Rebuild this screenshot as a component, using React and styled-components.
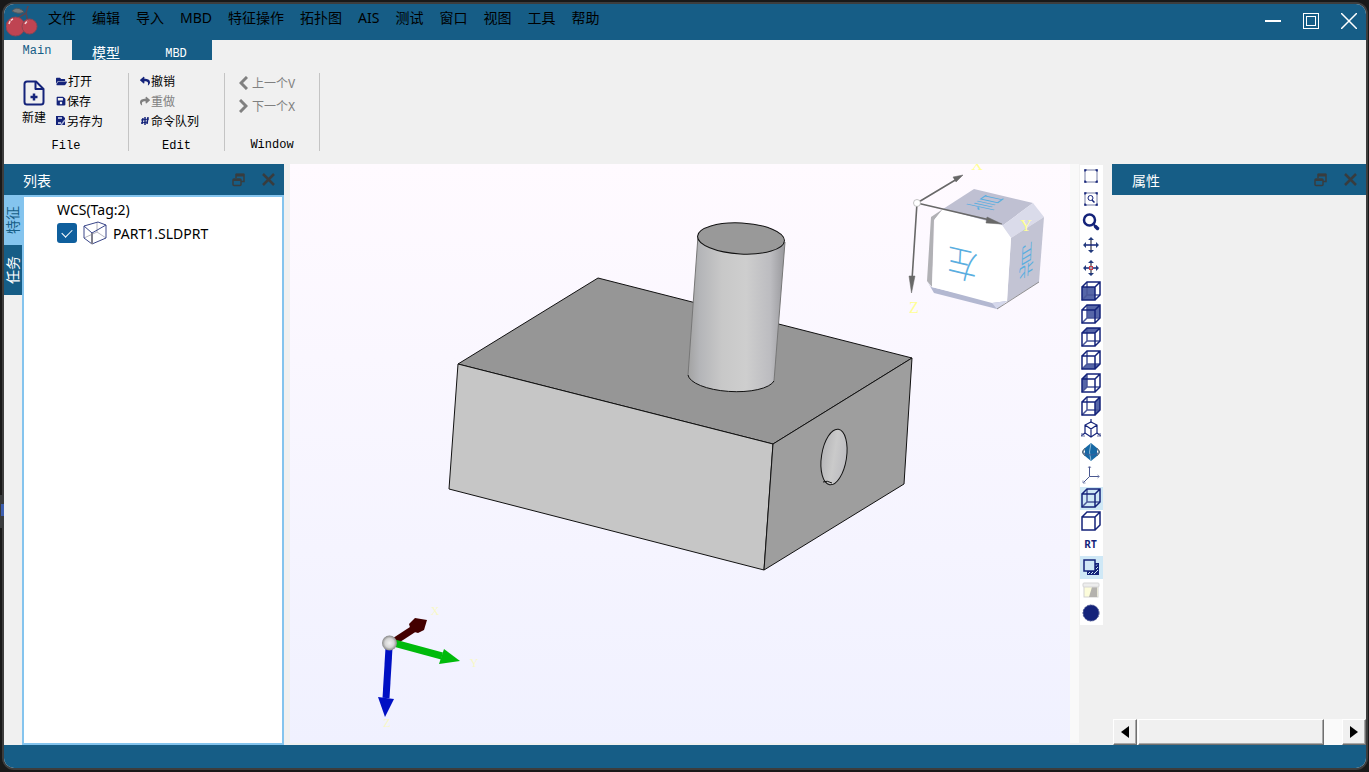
import React from 'react';
import styled, { createGlobalStyle, css } from 'styled-components';
import { FaFolderOpen, FaSave, FaReply, FaShare } from 'react-icons/fa';

const NAVY = '#14237a';
const BLUE = '#165d86';
const SKY = '#84c4ee';
const UI_FONT = '"Noto Sans", "Noto Sans CJK SC", sans-serif';
const SONG_FONT = '"Liberation Mono", "Noto Sans CJK SC", monospace';

const GlobalStyle = createGlobalStyle`
	* {
		box-sizing: border-box;
	}
	body {
		margin: 0;
		background: #191919;
		font-family: ${UI_FONT};
		font-size: 14px;
		color: #000;
	}
	button {
		border: none;
		padding: 0;
		background: none;
		font: inherit;
		color: inherit;
	}
	svg {
		display: block;
		flex: none;
	}
`;

const Desktop = styled.div`
	position: relative;
	height: 100vh;
	padding: 2px 1px 2px 2px;
`;

// piece of another window peeking out behind the frame
const EdgeTab = styled.div`
	position: absolute;
	left: 0;
	top: 495px;
	width: 4px;
	height: 33px;
	background: #3a3c3d;
	&::after {
		content: '';
		display: block;
		width: 3px;
		height: 12px;
		margin: 9px 0 0 1px;
		background: #3d5fb0;
	}
`;

const AppWindow = styled.div`
	display: flex;
	flex-direction: column;
	height: 100%;
	border: 2px solid #3d3d3d;
	border-radius: 12px;
	background: #f0f0f0;
	overflow: hidden;
`;

const TitleBar = styled.header`
	display: flex;
	height: 36px;
	flex: none;
	padding: 2px 5px 0 2px;
	background: ${BLUE};
`;

const MenuBar = styled.nav`
	display: flex;
	flex: 1;
	gap: 16px;
	height: 24px;
	margin-left: 10px;
`;

const MenuItem = styled.button`
	line-height: 24px;
	white-space: nowrap;
`;

const WindowButtons = styled.div`
	display: flex;
	gap: 14px;
`;

const WindowButton = styled.button`
	display: flex;
	align-items: center;
	justify-content: center;
	width: 24px;
	height: 30px;
`;

const TabBar = styled.div`
	display: flex;
	flex: none;
	height: 20px;
	font-family: ${SONG_FONT};
`;

const Tab = styled.button`
	width: ${p => (p.$active ? 68 : 70)}px;
	line-height: 20px;
	font-size: ${p => (p.$cjk ? 14 : 12)}px;
	padding: ${p => (p.$active ? '1px 2px 0 0' : '4px 2px 0 0')};
	color: ${p => (p.$active ? BLUE : '#fff')};
	background: ${p => (p.$active ? '#f0f0f0' : BLUE)};
`;

const Ribbon = styled.div`
	display: flex;
	flex: none;
	height: 104px;
	padding: 11px 0 9px;
	font-family: ${SONG_FONT};
	font-size: 12px;
`;

const RibbonGroup = styled.section`
	display: flex;
	flex-direction: column;
	width: ${p => p.$width}px;
`;

const RibbonDivider = styled.div`
	width: 1px;
	margin: 2px 0 4px;
	background: #c4c4c4;
`;

const GroupBody = styled.div`
	display: flex;
	gap: 9px;
	height: 60px;
	padding-left: ${p => p.$left}px;
`;

const GroupLabel = styled.div`
	padding-top: 5px;
	line-height: 20px;
	text-align: center;
`;

const BigButton = styled.button`
	display: flex;
	flex-direction: column;
	align-items: center;
	gap: 2px;
	width: 26px;
	padding-top: 9px;
	line-height: 22px;
	white-space: nowrap;
`;

const CommandList = styled.div`
	display: flex;
	flex-direction: column;
`;

const CommandButton = styled.button`
	display: flex;
	align-items: center;
	gap: ${p => (p.$tall ? 4 : 1)}px;
	height: ${p => (p.$tall ? 23 : 20)}px;
	white-space: nowrap;
	color: ${p => (p.$muted ? '#808080' : '#000')};
	svg {
		color: ${p => (p.$muted ? '#808080' : NAVY)};
	}
`;

const Workspace = styled.main`
	display: flex;
	flex: 1;
	min-height: 0;
`;

const Dock = styled.aside`
	display: flex;
	flex-direction: column;
	width: ${p => p.$width}px;
	flex: none;
`;

const DockTitle = styled.div`
	display: flex;
	align-items: center;
	gap: 17px;
	height: 31px;
	flex: none;
	padding: 0 9px 0 ${p => p.$left}px;
	background: ${BLUE};
	color: #fff;
	span {
		flex: 1;
	}
`;

const DockBody = styled.div`
	display: flex;
	flex: 1;
	min-height: 0;
`;

const SideTabs = styled.div`
	display: flex;
	flex-direction: column;
	width: 18px;
`;

const SideTab = styled.button`
	height: 50px;
	width: 18px;
	writing-mode: vertical-rl;
	text-orientation: sideways;
	transform: rotate(180deg);
	line-height: 18px;
	text-align: center;
	color: ${p => (p.$active ? BLUE : '#fff')};
	background: ${p => (p.$active ? SKY : BLUE)};
`;

const Tree = styled.ul`
	flex: 1;
	margin: 0;
	padding: 0 0 0 33px;
	border: 2px solid ${SKY};
	background: #fff;
	list-style: none;
`;

const TreeRow = styled.li`
	display: flex;
	align-items: center;
	gap: 6px;
	height: 24px;
`;

const TreeLabel = styled.label`
	display: flex;
	align-items: center;
	gap: 6px;
`;

const TreeCheck = styled.input`
	appearance: none;
	width: 20px;
	height: 20px;
	margin: 0;
	border-radius: 3px;
	background: #0f5f9d;
	display: grid;
	place-items: center;
	&:checked::after {
		content: '';
		width: 9px;
		height: 5px;
		margin-top: -3px;
		border: solid #fff;
		border-width: 0 0 1px 1px;
		transform: rotate(-45deg);
	}
`;

const Viewport = styled.div`
	flex: 1;
	min-width: 0;
	margin: 0 0 2px 6px;
	background: linear-gradient(#fffaff, #f0f1ff);
	svg {
		width: 100%;
		height: 100%;
	}
`;

const Gutter = styled.div`
	width: 9px;
	margin-bottom: 2px;
	background: #f9f9f9;
`;

const ViewTools = styled.div`
	display: flex;
	flex-direction: column;
	width: 23px;
	margin: 1px 9px 0 1px;
`;

const ViewTool = styled.button`
	display: flex;
	align-items: center;
	justify-content: center;
	height: 23px;
	padding: 0 2px 2px 0;
	font-size: 10px;
	font-weight: 700;
	color: ${NAVY};
	background: ${p => (p.$on ? '#cfe8f6' : '#fff')};
`;

const Properties = styled.div`
	flex: 1;
`;

const ScrollBar = styled.div`
	display: flex;
	height: 26px;
	margin-left: 1px;
	background: #fafafa;
`;

const raised = css`
	background: #f0f0f0;
	border: 1px solid;
	border-color: #fff #707070 #707070 #fff;
	box-shadow: inset -1px -1px 0 #a8a8a8;
`;

const ScrollButton = styled.button`
	${raised}
	display: flex;
	align-items: center;
	justify-content: center;
	width: 24px;
`;

const ScrollThumb = styled.div`
	${raised}
	flex: 1;
	margin: 0 18px 0 1px;
`;

const StatusBar = styled.footer`
	height: 23px;
	flex: none;
	background: ${BLUE};
`;

const Logo = () => (
	<svg width="32" height="32" viewBox="0 0 32 32">
		<path d="M12 12L20 7L22 0M20 7L22 16" fill="none" stroke="#5b4550" strokeWidth="1.5" />
		<path d="M6 5Q10 0 16 4L18 6Q12 9 6 5Z" fill="#77797a" stroke="#4d5860" />
		<circle cx="9.500" cy="20.500" r="9.500" fill="#bf4452" stroke="#8c4553" />
		<circle cx="23.500" cy="20.500" r="7.500" fill="#bf4452" stroke="#8c4553" />
		<path d="M3 18Q4 14 7 13M19 18Q20 16 22 15" fill="none" stroke="#f3d4d7" strokeWidth="1.500" strokeDasharray="3 1" />
	</svg>
);

const NewFileIcon = () => (
	<svg width="22" height="26" viewBox="0 0 22 26" fill="none" stroke={NAVY} strokeWidth="2" strokeLinejoin="round">
		<path d="M4 1.500H13L20.500 9V22Q20.500 24.500 18 24.500H4Q1.500 24.500 1.500 22V4Q1.500 1.500 4 1.500Z" />
		<path d="M12.500 2V9H20" />
		<path d="M11 13.500V20.500M7.500 17H14.500" strokeWidth="2.500" />
	</svg>
);

const SaveAsIcon = () => (
	<svg width="10" height="10" viewBox="0 0 10 10">
		<path d="M0 0H7L9 2V9H0Z" fill={NAVY} />
		<path d="M2 1H6V3H2ZM2 6H5V8H2Z" fill="#aeb6d8" />
		<path d="M5 9L9 4" stroke="#aeb6d8" strokeWidth="1.500" />
	</svg>
);

const QueueIcon = () => (
	<svg width="10" height="10" viewBox="0 0 10 10" stroke={NAVY} fill="none">
		<path d="M3 2L2 8M5 1V9M8 1L7 8" strokeWidth="1.500" />
		<path d="M1 4L9 3M1 7L8 6" />
	</svg>
);

const ChevronIcon = ({ next }) => (
	<svg width="9" height="14" viewBox="0 0 9 14" fill="none" stroke="currentColor" strokeWidth="3">
		<path d={next ? 'M1 1L7 7L1 13' : 'M8 1L2 7L8 13'} />
	</svg>
);

const RestoreIcon = () => (
	<svg width="13" height="14" viewBox="0 0 13 14" fill="none" stroke="#383c3e" strokeWidth="1.500">
		<path d="M4 5V1.500H12V8.500H9" />
		<path d="M4 2H12" strokeWidth="3" />
		<rect x="1" y="6" width="8" height="6.500" rx="1" />
		<path d="M1 7H9" strokeWidth="2" />
	</svg>
);

const CrossIcon = () => (
	<svg width="13" height="13" viewBox="0 0 13 13" stroke="#383c3e" strokeWidth="2.500">
		<path d="M1 1L12 12M12 1L1 12" />
	</svg>
);

const PartIcon = () => (
	<svg width="24" height="24" viewBox="0 0 24 24" fill="none" strokeLinejoin="round">
		<path d="M14 1V11L1 17M14 11L23 17" stroke="#b4b4c0" />
		<path d="M1 5L15 1L23 4V17L9 23L1 17ZM1 5L9 12L23 4" stroke="#3a4689" />
		<path d="M9 12V23" stroke="#80808c" strokeWidth="2" />
	</svg>
);

const SHADES = {
	front: 'M1 6H14V19H1Z',
	back: 'M6 1H19V14H6Z',
	top: 'M1 6L6 1H19L14 6Z',
	bottom: 'M1 19L6 14H19L14 19Z',
	left: 'M1 6L6 1V14L1 19Z',
	right: 'M14 6L19 1V14L14 19Z',
};

const CubeIcon = ({ side, solid }) => (
	<svg width="20" height="20" viewBox="0 0 20 20" fill="none" stroke={NAVY} strokeWidth="1.500">
		{side && <path d={SHADES[side]} fill="#5666a8" stroke="none" />}
		{!solid && <path d="M6 1V14H19M6 14L1 19" stroke="#4a5799" />}
		<path d="M1 6H14V19H1ZM1 6L6 1H19V14L14 19M14 6L19 1" />
	</svg>
);

const FitIcon = ({ lens }) => (
	<svg width="14" height="14" viewBox="0 0 14 14" fill="none">
		<rect x="1" y="1" width="12" height="12" stroke="#a5aac4" strokeWidth="1.500" />
		<path d="M1 2.500V1H2.500M11.500 1H13V2.500M13 11.500V13H11.500M2.500 13H1V11.500" stroke={NAVY} strokeWidth="1.500" />
		{lens && <circle cx="6.500" cy="6" r="2.500" stroke={NAVY} />}
		{lens && <path d="M8 8L10.500 10.500" stroke={NAVY} strokeWidth="1.500" />}
	</svg>
);

const ZoomIcon = () => (
	<svg width="18" height="18" viewBox="0 0 18 18" fill="none" stroke={NAVY} strokeLinecap="round">
		<circle cx="7.500" cy="7" r="5.500" strokeWidth="2.500" />
		<path d="M11.500 11L13 13" strokeWidth="2" />
		<path d="M13.500 13.500L15.500 15.500" strokeWidth="3.500" />
	</svg>
);

const PanIcon = ({ target }) => (
	<svg width="16" height="16" viewBox="0 0 16 16">
		<path d="M8 2V14" stroke="#85858f" strokeWidth="2" />
		<path d="M2 8H14" stroke={NAVY} strokeWidth="1.500" />
		<path d="M5 3L8 0L11 3ZM5 13L8 16L11 13ZM3 5L0 8L3 11ZM13 5L16 8L13 11Z" fill="#233b7d" />
		{target && <rect x="6.500" y="6.500" width="3" height="3" fill="#a9a9b4" stroke="#c8404c" />}
	</svg>
);

const AxoIcon = () => (
	<svg width="20" height="20" viewBox="0 0 20 20" fill="none" stroke={NAVY} strokeWidth="1.200">
		<path d="M10 0V4M4 14L0 17M16 14L20 17" />
		<path d="M10 3L16 6V14L10 18L4 14V6ZM4 6L10 10L16 6M10 10V18" />
		<path d="M1 14V17H4M16 17H19V14" stroke="#6c76a7" />
	</svg>
);

const RotateIcon = () => (
	<svg width="18" height="18" viewBox="0 0 18 18">
		<ellipse cx="9" cy="9" rx="8" ry="4" fill="none" stroke="#72899d" strokeWidth="1.500" />
		<path d="M9 0L15 5V13L9 18L3 13V5Z" fill="#1769a5" />
		<path d="M9 0Q6 9 9 18" fill="none" stroke="#8fb9d3" />
		<path d="M2 10Q9 14 16 10" fill="none" stroke="#3b5f9a" />
		<path d="M3 5L0 9L3 13M15 5L18 9L15 13" fill="none" stroke="#50677b" />
	</svg>
);

const AxesIcon = () => (
	<svg width="18" height="18" viewBox="0 0 18 18" fill="none" stroke="#4a5890">
		<path d="M7.500 1V10.500H17M7.500 10.500L1 17" />
		<path d="M6 2L7.500 0L9 2M15.500 9L17.500 10.500L15.500 12M1 14.500V17H3.500" stroke="#8a93b8" />
	</svg>
);

const ShadowIcon = () => (
	<svg width="16" height="16" viewBox="0 0 16 16">
		<path d="M12 4H16V16H4V12H12Z" fill={NAVY} />
		<path d="M5 15L7 13M8 15L10 13M11 15L15 11M13 10L15 8M12.500 7L14 5.500" stroke="#cfe8f6" />
		<rect x="1" y="1" width="11" height="11" fill="#cfe8f6" stroke={NAVY} strokeWidth="1.500" />
	</svg>
);

const MaterialIcon = () => (
	<svg width="18" height="16" viewBox="0 0 18 16">
		<rect x="2" y="4" width="14" height="11" fill="#fcfcda" stroke="#d2d2d2" />
		<path d="M10 5H15V15H7Z" fill="#b4b2ae" />
		<rect x="1" y="1" width="16" height="4" rx="1" fill="#ededed" stroke="#d5d5d5" />
	</svg>
);

const BallIcon = () => (
	<svg width="18" height="18" viewBox="0 0 18 18">
		<circle cx="9" cy="9" r="8" fill={NAVY} stroke="#47548f" strokeDasharray="2 1" />
	</svg>
);

const Model = () => (
	<g stroke="#111" strokeLinejoin="round">
		<path d="M458 364L598 278L912 358L773 444Z" fill="#969696" />
		<path d="M458 364L773 444L764 570L449 489Z" fill="#c6c6c6" />
		<path d="M773 444L912 358L904 484L764 570Z" fill="#9e9e9e" />
		<path d="M698 236L688 375A43.500 15.500 3 0 0 774 381L785 242Z" fill="url(#shaft)" stroke="none" />
		<path d="M698 236L688 375M774 381L785 242" stroke="#777" fill="none" />
		<path d="M688 375A43.500 15.500 3 0 0 774 381" fill="none" />
		<ellipse cx="741" cy="238.500" rx="43.500" ry="15.500" transform="rotate(3 741 238.500)" fill="#999" />
		<ellipse cx="834" cy="457" rx="12.500" ry="28" transform="rotate(9 834 457)" fill="url(#bore)" />
		<path d="M823 482Q827 480 832 483" fill="none" />
	</g>
);

const ViewCube = () => (
	<g>
		<path d="M943 209L974 189L1033 203L1002 226Z" fill="#bfc0d2" />
		<path d="M1002 226L1033 203L1044 217L1011 238Z" fill="#dadbea" />
		<path d="M1011 238L1044 217L1039 282L1007 302Z" fill="#c3c4d4" />
		<path d="M931 217L943 209L934 220L932 287L927 281Z" fill="#b1b1b5" />
		<path d="M931 287L992 301L1007 301L997 309L934 293L927 281Z" fill="#b3b8d1" />
		<path d="M943 209L1002 225L1011 238L1007 301L992 303L932 287L935 219Z" fill="#fff" />
		<path d="M992 303L1007 301L997 309Z" fill="#d5d8ec" />
		<path d="M997 309L1039 282" stroke="#777" strokeWidth="0.800" />
		<g fill="#5aaee0" fontFamily='"Noto Sans CJK SC", sans-serif' textAnchor="middle">
			<text fontSize="32" fontWeight="300" transform="matrix(-0.94 -0.22 0.06 -1.1 963 251)">左</text>
			<text fontSize="26" fontWeight="300" transform="matrix(-0.6 0.36 0.06 -1.4 1027 247)">背</text>
			<text fontSize="28" fontWeight="300" transform="matrix(-1.1 -0.24 0.7 -0.5 993 198)">言</text>
		</g>
		<g stroke="#686868" strokeWidth="1.600" fill="#686868">
			<path d="M917 203L957 179M917 203L990 220M917 203L912 280" />
			<path d="M963 175L956 182L953 177ZM1002 224L986 223L987 217ZM911.500 293L909 276L915 276Z" strokeWidth="0.500" />
		</g>
		<circle cx="917" cy="203" r="3.500" fill="#fff" stroke="#aaa" strokeWidth="0.700" />
		<g fill="#ffff96" fontFamily='"Liberation Serif", serif' fontSize="16" textAnchor="middle">
			<text x="977" y="170">X</text>
			<text x="1026" y="231">Y</text>
			<text x="914" y="313">Z</text>
		</g>
	</g>
);

const Triad = () => (
	<g>
		<path d="M395 641L415 628" stroke="#430000" strokeWidth="7" />
		<path d="M409 624L415 618L427 620L424 630L418 633L411 631Z" fill="#430000" />
		<path d="M394 643L442 656" stroke="#00ba0b" strokeWidth="7" />
		<path d="M444 649L439 664L460 661Z" fill="#00ba0b" />
		<path d="M389 648L386 698" stroke="#0010c4" strokeWidth="7" />
		<path d="M378 697L394 699L385 717Z" fill="#0010c4" />
		<circle cx="389.500" cy="643" r="7.500" fill="url(#ball)" />
		<g fill="#f8f8c8" fontFamily='"Liberation Serif", serif' fontSize="12" textAnchor="middle">
			<text x="435" y="615">X</text>
			<text x="474" y="667">Y</text>
			<text x="387" y="727">Z</text>
		</g>
	</g>
);

// scene units are window pixels, offset to where the canvas starts
const Scene = () => (
	<svg viewBox="290 164 780 579" preserveAspectRatio="xMidYMid meet">
		<defs>
			<linearGradient id="shaft">
				<stop offset="0" stopColor="#a2a2a2" />
				<stop offset="0.120" stopColor="#b4b5b8" />
				<stop offset="0.350" stopColor="#c8c8c8" />
				<stop offset="0.600" stopColor="#cecece" />
				<stop offset="0.850" stopColor="#bcbcc0" />
				<stop offset="1" stopColor="#98989c" />
			</linearGradient>
			<linearGradient id="bore">
				<stop offset="0" stopColor="#b6b6b8" />
				<stop offset="0.500" stopColor="#cacaca" />
				<stop offset="1" stopColor="#bcbcc0" />
			</linearGradient>
			<radialGradient id="ball">
				<stop offset="0" stopColor="#f0f0f0" />
				<stop offset="0.600" stopColor="#d4d4d4" />
				<stop offset="1" stopColor="#888" />
			</radialGradient>
		</defs>
		<Model />
		<ViewCube />
		<Triad />
	</svg>
);

const menus = ['文件', '编辑', '导入', 'MBD', '特征操作', '拓扑图', 'AIS', '测试', '窗口', '视图', '工具', '帮助'];

const viewTools = [
	{ name: 'fit', icon: <FitIcon /> },
	{ name: 'fit selection', icon: <FitIcon lens /> },
	{ name: 'zoom', icon: <ZoomIcon /> },
	{ name: 'pan', icon: <PanIcon /> },
	{ name: 'pan to point', icon: <PanIcon target /> },
	{ name: 'front', icon: <CubeIcon side="front" /> },
	{ name: 'back', icon: <CubeIcon side="back" /> },
	{ name: 'top', icon: <CubeIcon side="top" /> },
	{ name: 'bottom', icon: <CubeIcon side="bottom" /> },
	{ name: 'left', icon: <CubeIcon side="left" /> },
	{ name: 'right', icon: <CubeIcon side="right" /> },
	{ name: 'axonometric', icon: <AxoIcon /> },
	{ name: 'rotate', icon: <RotateIcon /> },
	{ name: 'axes', icon: <AxesIcon /> },
	{ name: 'wireframe', icon: <CubeIcon />, on: true },
	{ name: 'shaded', icon: <CubeIcon solid /> },
	{ name: 'ray tracing', icon: 'RT' },
	{ name: 'shadow', icon: <ShadowIcon />, on: true },
	{ name: 'material', icon: <MaterialIcon /> },
	{ name: 'environment', icon: <BallIcon /> },
];

const TitleBarComponent = () => {
	return (
		<TitleBar>
			<Logo />
			<MenuBar>
				{menus.map(m => <MenuItem key={m}>{m}</MenuItem>)}
			</MenuBar>
			<WindowButtons>
				<WindowButton aria-label="minimize">
					<svg width="16" height="16" viewBox="0 0 16 16"><path d="M0 8H16" stroke="#fff" strokeWidth="2" /></svg>
				</WindowButton>
				<WindowButton aria-label="maximize">
					<svg width="16" height="16" viewBox="0 0 16 16" fill="none" stroke="#fff">
						<rect x="0.500" y="0.500" width="15" height="15" />
						<rect x="3.500" y="3.500" width="9" height="9" />
					</svg>
				</WindowButton>
				<WindowButton aria-label="close">
					<svg width="16" height="16" viewBox="0 0 16 16"><path d="M0 0L16 16M16 0L0 16" stroke="#fff" strokeWidth="1.500" /></svg>
				</WindowButton>
			</WindowButtons>
		</TitleBar>
	)
}

const RibbonComponent = () => {
	return (
		<>
			<TabBar>
				<Tab $active>Main</Tab>
				<Tab $cjk>模型</Tab>
				<Tab>MBD</Tab>
			</TabBar>
			<Ribbon>
				<RibbonGroup $width={124}>
					<GroupBody $left={17}>
						<BigButton><NewFileIcon />新建</BigButton>
						<CommandList>
							<CommandButton><FaFolderOpen size={11} />打开</CommandButton>
							<CommandButton><FaSave size={10} />保存</CommandButton>
							<CommandButton><SaveAsIcon />另存为</CommandButton>
						</CommandList>
					</GroupBody>
					<GroupLabel>File</GroupLabel>
				</RibbonGroup>
				<RibbonDivider />
				<RibbonGroup $width={95}>
					<GroupBody $left={11}>
						<CommandList>
							<CommandButton><FaReply size={10} />撤销</CommandButton>
							<CommandButton $muted><FaShare size={10} />重做</CommandButton>
							<CommandButton><QueueIcon />命令队列</CommandButton>
						</CommandList>
					</GroupBody>
					<GroupLabel>Edit</GroupLabel>
				</RibbonGroup>
				<RibbonDivider />
				<RibbonGroup $width={94}>
					<GroupBody $left={14}>
						<CommandList>
							<CommandButton $muted $tall><ChevronIcon />上一个V</CommandButton>
							<CommandButton $muted $tall><ChevronIcon next />下一个X</CommandButton>
						</CommandList>
					</GroupBody>
					<GroupLabel>Window</GroupLabel>
				</RibbonGroup>
				<RibbonDivider />
			</Ribbon>
		</>
	)
}

const DockTitleComponent = ({ title, left }) => {
	return (
		<DockTitle $left={left}>
			<span>{title}</span>
			<button aria-label="float"><RestoreIcon /></button>
			<button aria-label="close"><CrossIcon /></button>
		</DockTitle>
	)
}

const ListDock = () => {
	return (
		<Dock $width={280}>
			<DockTitleComponent title="列表" left={19} />
			<DockBody>
				<SideTabs>
					<SideTab $active>特征</SideTab>
					<SideTab>任务</SideTab>
				</SideTabs>
				<Tree>
					<TreeRow>WCS(Tag:2)</TreeRow>
					<TreeRow>
						<TreeCheck type="checkbox" id="part1" defaultChecked />
						<TreeLabel htmlFor="part1"><PartIcon />PART1.SLDPRT</TreeLabel>
					</TreeRow>
				</Tree>
			</DockBody>
		</Dock>
	)
}

const PropertyDock = () => {
	return (
		<Dock $width={254}>
			<DockTitleComponent title="属性" left={20} />
			<Properties />
			<ScrollBar>
				<ScrollButton aria-label="scroll left">
					<svg width="8" height="12" viewBox="0 0 8 12"><path d="M8 0V12L0 6Z" /></svg>
				</ScrollButton>
				<ScrollThumb />
				<ScrollButton aria-label="scroll right">
					<svg width="8" height="12" viewBox="0 0 8 12"><path d="M0 0V12L8 6Z" /></svg>
				</ScrollButton>
			</ScrollBar>
		</Dock>
	)
}

const App = () => {
	return (
		<Desktop>
			<GlobalStyle />
			<EdgeTab />
			<AppWindow>
				<TitleBarComponent />
				<RibbonComponent />
				<Workspace>
					<ListDock />
					<Viewport><Scene /></Viewport>
					<Gutter />
					<ViewTools>
						{viewTools.map(t => (
							<ViewTool key={t.name} aria-label={t.name} $on={t.on}>{t.icon}</ViewTool>
						))}
					</ViewTools>
					<PropertyDock />
				</Workspace>
				<StatusBar />
			</AppWindow>
		</Desktop>
	)
}

export default App
